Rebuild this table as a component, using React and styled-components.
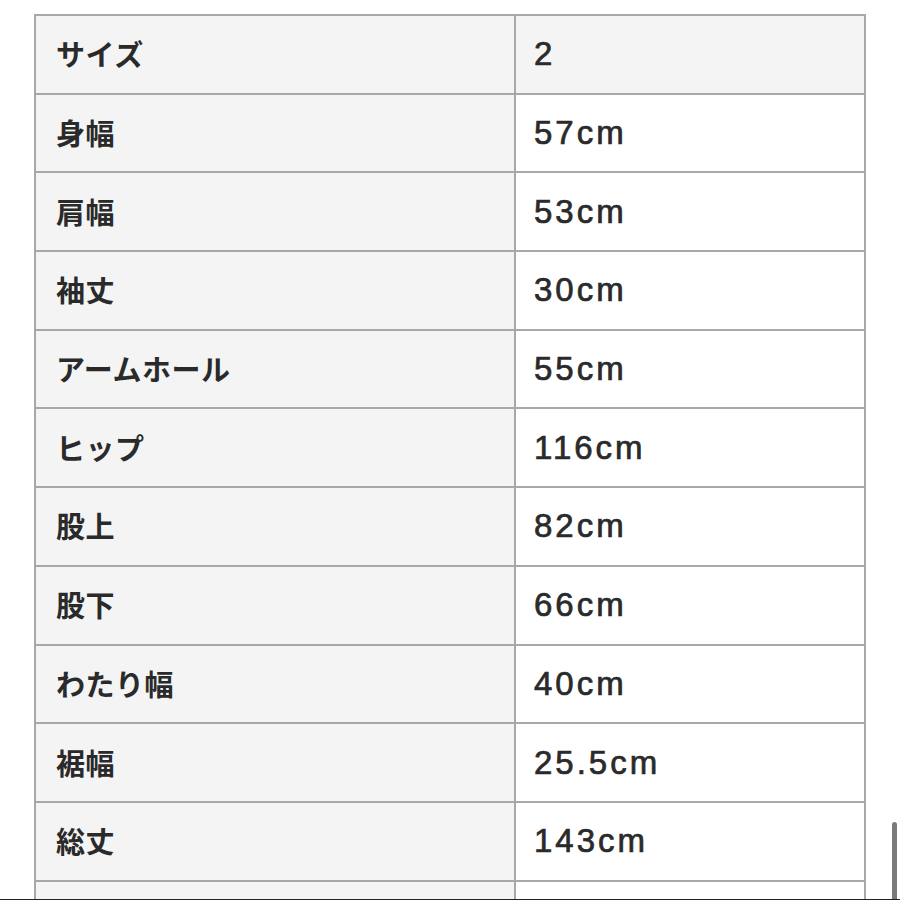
import styled, { createGlobalStyle } from 'styled-components';

const GlobalStyle = createGlobalStyle`
  html, body {
    margin: 0;
    padding: 0;
    background: #ffffff;
    overflow: hidden;
    height: 900px;
  }
  body {
    font-family: "Liberation Sans", "Noto Sans CJK JP", sans-serif;
    color: #2a2a2a;
  }
`;

const Page = styled.div`
  padding: 14px 0 0 34px;
`;

const Table = styled.div`
  width: 832px;
  box-sizing: border-box;
  border: 2px solid #a8a8a8;
  border-bottom: none;
`;

const Row = styled.div`
  display: grid;
  grid-template-columns: 480px 1fr;
  height: 78.7px;
  box-sizing: border-box;
  border-bottom: 2px solid #a8a8a8;
`;

const LabelCell = styled.div`
  display: flex;
  align-items: center;
  padding-left: 20px;
  padding-bottom: 2px;
  background: #f4f4f4;
  border-right: 2px solid #a8a8a8;
  font-family: "Noto Sans CJK JP", "Liberation Sans", sans-serif;
  font-size: 29px;
  font-weight: 700;
  letter-spacing: 0.5px;
`;

const ValueCell = styled.div`
  display: flex;
  align-items: center;
  padding-left: 18px;
  background: ${({ $head }) => ($head ? '#f4f4f4' : '#ffffff')};
  font-size: 33px;
  letter-spacing: 3px;
  -webkit-text-stroke: 0.7px #2a2a2a;
`;

const Scrollbar = styled.div`
  position: fixed;
  right: 3px;
  top: 822px;
  width: 5px;
  height: 90px;
  border-radius: 3px;
  background: #7b7b7b;
`;

const BottomEdge = styled.div`
  position: fixed;
  left: 0;
  right: 0;
  bottom: 0;
  height: 1px;
  background: #222;
`;

const rows = [
  ['サイズ', '2'],
  ['身幅', '57cm'],
  ['肩幅', '53cm'],
  ['袖丈', '30cm'],
  ['アームホール', '55cm'],
  ['ヒップ', '116cm'],
  ['股上', '82cm'],
  ['股下', '66cm'],
  ['わたり幅', '40cm'],
  ['裾幅', '25.5cm'],
  ['総丈', '143cm'],
  ['', ''],
];

export default function App() {
  return (
    <>
      <GlobalStyle />
      <Page>
        <Table>
          {rows.map(([label, value], i) => (
            <Row key={i}>
              <LabelCell>{label}</LabelCell>
              <ValueCell $head={i === 0}>{value}</ValueCell>
            </Row>
          ))}
        </Table>
      </Page>
      <Scrollbar />
      <BottomEdge />
    </>
  );
}
